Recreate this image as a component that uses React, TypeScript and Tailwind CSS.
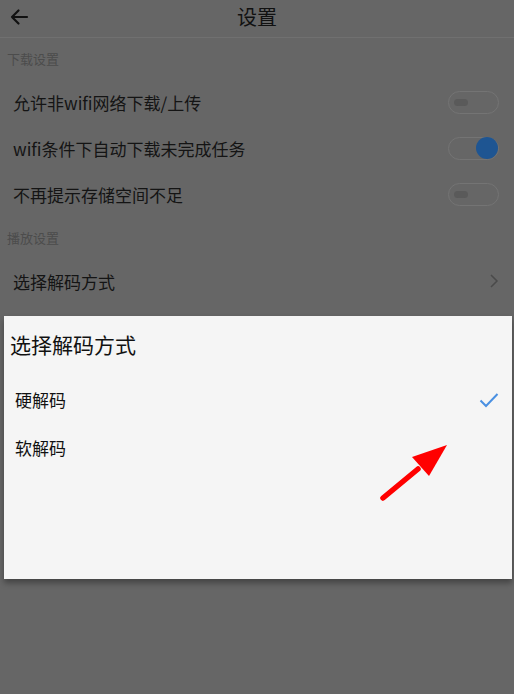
import React from "react";

const font = { fontFamily: '"Noto Sans CJK SC", "Noto Sans", sans-serif' };

function Toggle({ on }: { on?: boolean }) {
  return (
    <div className="relative w-[51px] h-[23px] rounded-full border-[1.5px] border-[#747474] bg-[#666]">
      {on ? (
        <div className="absolute right-[0px] top-[-1px] w-[22px] h-[22px] rounded-full bg-[#1e5592]" />
      ) : (
        <div className="absolute left-[5px] top-[7px] w-[14px] h-[7px] rounded-full bg-[#5a5a5a]" />
      )}
    </div>
  );
}

function Row({ label, right }: { label: string; right: React.ReactNode }) {
  return (
    <div className="h-[46px] flex items-center justify-between pl-[13px] pr-[15px]">
      <span className="text-[17px] text-[#141414] leading-none">{label}</span>
      {right}
    </div>
  );
}

export default function App() {
  return (
    <div className="relative w-[514px] h-[694px] bg-[#666666] overflow-hidden" style={font}>
      <div className="h-[38px] relative flex items-center justify-center border-b border-[#707070]">
        <svg className="absolute left-[9px] top-[7px]" width="20" height="20" viewBox="0 0 20 20">
          <path d="M18 10H3M9.5 3.5L3 10l6.5 6.5" stroke="#111" strokeWidth="2.2" fill="none" strokeLinecap="round" strokeLinejoin="round" />
        </svg>
        <span className="text-[20px] text-[#111] leading-none mb-[4px]">设置</span>
      </div>
      <div className="h-[41px] flex items-center pl-[7px] text-[13px] text-[#4c4c4c]">下载设置</div>
      <Row label="允许非wifi网络下载/上传" right={<Toggle />} />
      <Row label="wifi条件下自动下载未完成任务" right={<Toggle on />} />
      <Row label="不再提示存储空间不足" right={<Toggle />} />
      <div className="h-[41px] flex items-center pl-[7px] text-[13px] text-[#4c4c4c]">播放设置</div>
      <Row
        label="选择解码方式"
        right={
          <svg width="10" height="16" viewBox="0 0 10 16" className="mr-[0px]">
            <path d="M2 2l6 6-6 6" stroke="#4a4a4a" strokeWidth="1.5" fill="none" />
          </svg>
        }
      />

      <div className="absolute left-[4px] top-[316px] w-[508px] h-[263px] bg-[#f5f5f5] shadow-[0_4px_6px_rgba(0,0,0,0.35)]">
        <div className="h-[58px] flex items-center pl-[6px] text-[21px] text-[#111]">选择解码方式</div>
        <div className="h-[52px] flex items-center justify-between pl-[11px] pr-[13px]">
          <span className="text-[17px] text-[#111]">硬解码</span>
          <svg width="20" height="16" viewBox="0 0 20 16">
            <path d="M1.5 8.5l5.5 5.5L18.5 2" stroke="#4a90e2" strokeWidth="2" fill="none" />
          </svg>
        </div>
        <div className="h-[44px] flex items-center pl-[11px]">
          <span className="text-[17px] text-[#111]">软解码</span>
        </div>
      </div>

      <svg className="absolute left-0 top-0 pointer-events-none" width="514" height="694">
        <line x1="383" y1="498" x2="418" y2="469" stroke="#ff0000" strokeWidth="5.5" strokeLinecap="round" />
        <polygon points="447,445 412,457 429,476" fill="#ff0000" />
      </svg>
    </div>
  );
}
